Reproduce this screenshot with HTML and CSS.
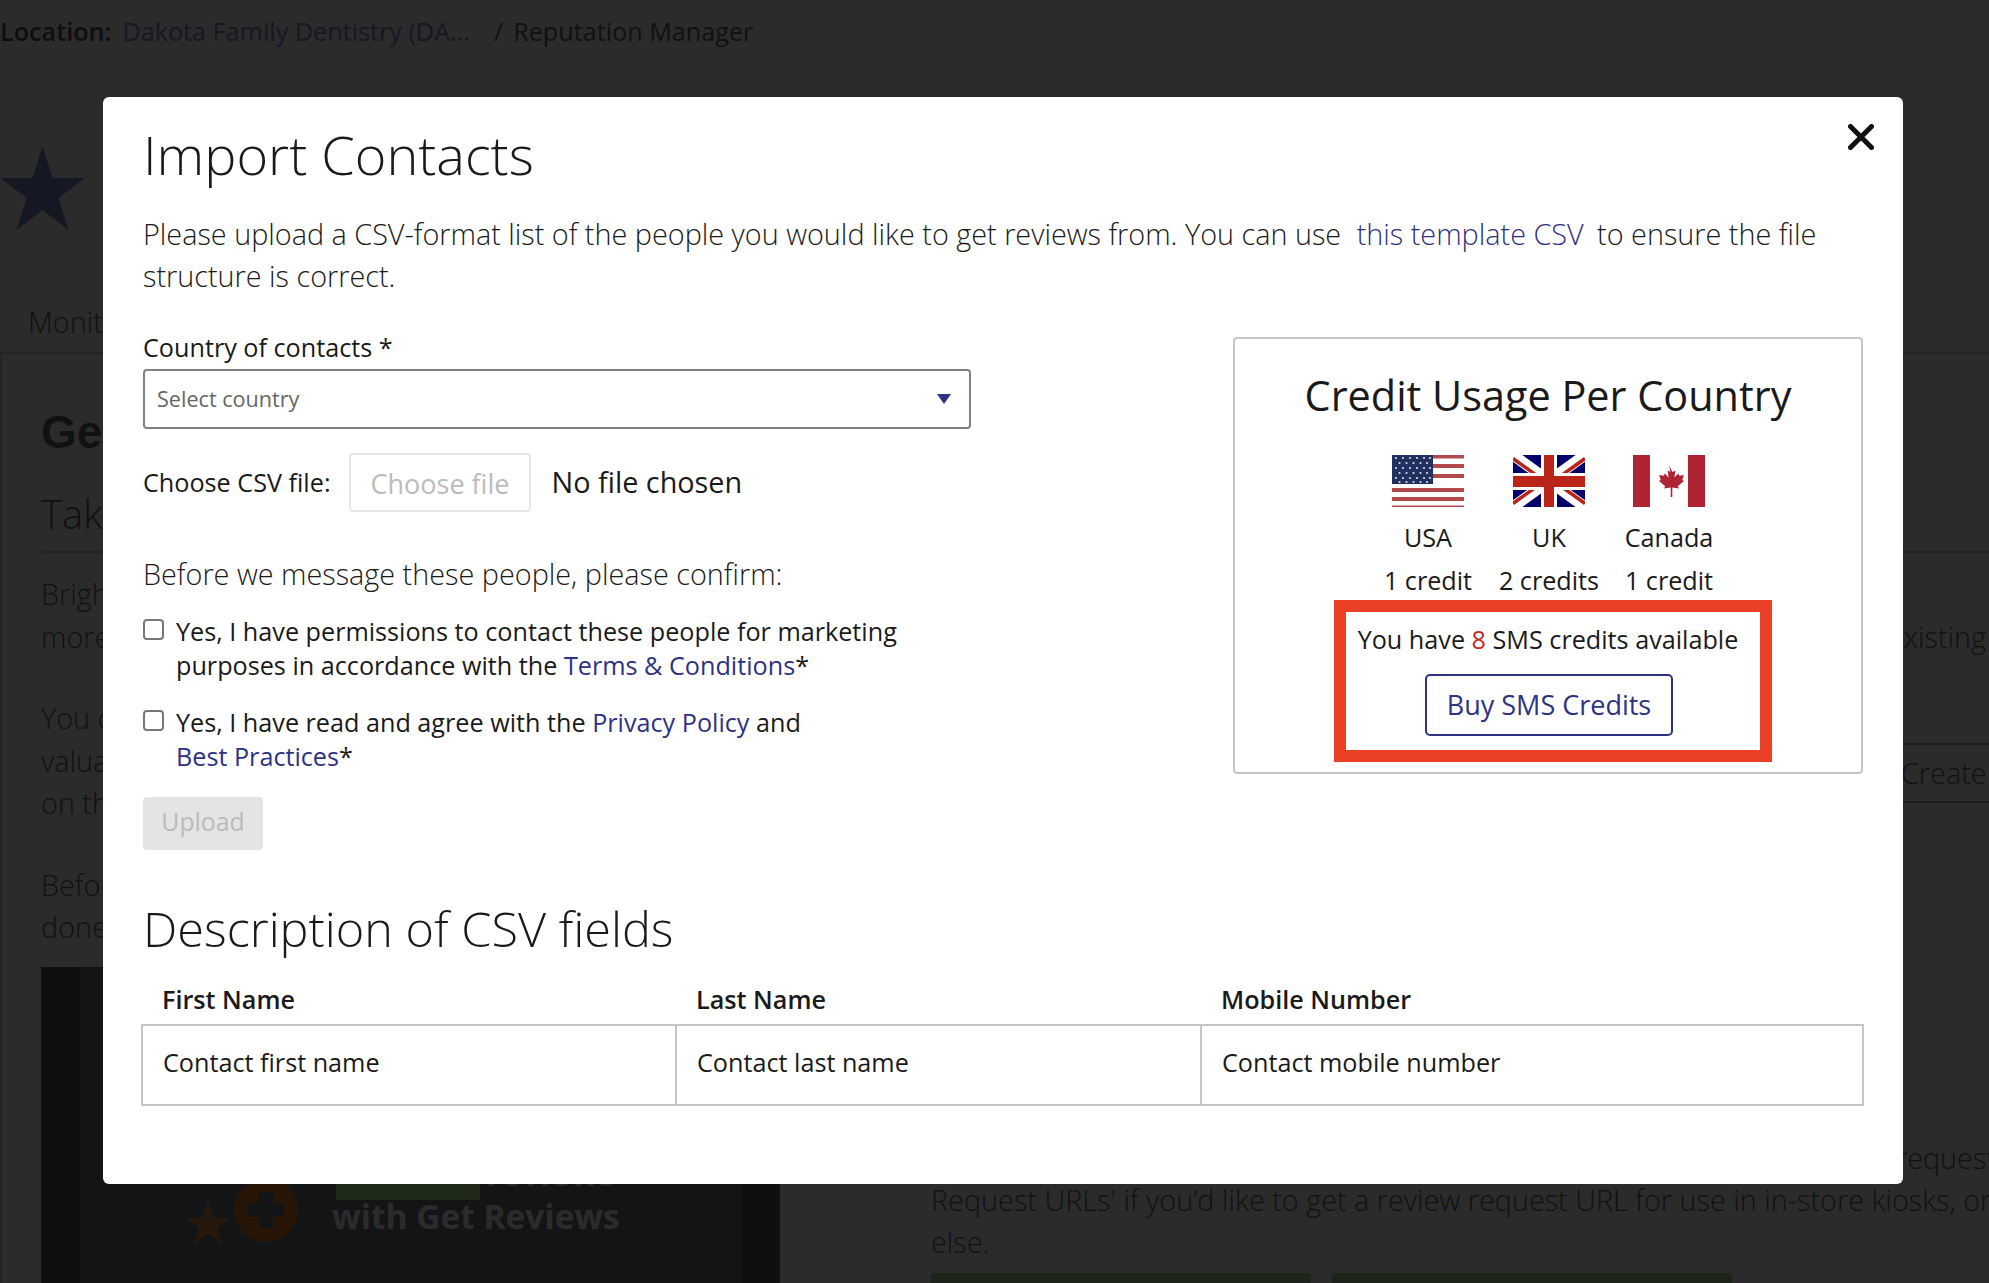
FILE: index.html
```html
<!DOCTYPE html>
<html lang="en">
<head>
<meta charset="utf-8">
<title>Import Contacts</title>
<link rel="stylesheet" href="styles.css">
</head>
<body>
<div class="page">
  <div class="crumbs"><b>Location:</b><a class="crumb-link">Dakota Family Dentistry (DA...</a><span class="crumb-sep">/</span><span>Reputation Manager</span></div>
  <svg class="page-star" viewBox="0 0 85 84"><polygon points="42.5,0 52.5,32 85,32 58.5,52 68.5,84 42.5,64 16.5,84 26.5,52 0,32 32.5,32"/></svg>
  <div class="tabs">Monitor</div>
  <section class="panel">
    <h2 class="panel-title">Get Reviews</h2>
    <h3 class="panel-sub">Take control of your reviews</h3>
    <p class="panel-para">BrightLocal helps you collect genuine customer reviews by inviting the people you have served to share their experience<span class="fit">more people about your business, so you can grow trust and win new customers, including those from your existing</span></p>
    <div class="create-row">
      <p class="panel-para">You can send review requests by SMS or email to share how<br>valuable feedback is to your business and to help you improve<br>on the reviews that customers see on the sites that matter.</p>
      <span class="create-btn">Create</span>
    </div>
    <p class="panel-para">Before you begin, please make sure your contact list is ready and<br>done in the correct format.</p>
    <div class="lower">
      <div class="promo">
        <div class="promo-inner">
          <svg class="promo-logo" viewBox="0 0 112 64"><polygon class="promo-star" points="20,20 26,38 42,38 29,48 34,64 20,54 6,64 11,48 -2,38 14,38"/><circle class="promo-disc" cx="78" cy="30" r="32"/><path class="promo-plus" d="M71 12h14v11h11v14H85v11H71V37H60V23h11z"/></svg>
          <div class="promo-copy">
            <div class="promo-l1"><span class="promo-mark"></span>reviews</div>
            <div class="promo-l2">with Get Reviews</div>
          </div>
        </div>
      </div>
      <div class="lower-right">
        <p class="panel-para lower-text">Choose how you'd like to reach your customers below. Select 'Send review request</p>
        <p class="panel-para lower-text">Request URLs' if you’d like to get a review request URL for use in in-store kiosks, or</p>
        <p class="panel-para lower-text">else.</p>
        <div class="lower-btns"><span class="green one"></span><span class="green two"></span></div>
      </div>
    </div>
  </section>
</div>

<div class="overlay">
  <div class="modal">
    <svg class="close" viewBox="0 0 26 26"><path d="M2.5 2.5l21 21M23.5 2.5l-21 21"/></svg>
    <h1 class="title">Import Contacts</h1>
    <p class="intro">Please upload a CSV-format list of the people you would like to get reviews from. You can use <a class="link link-gap">this template CSV</a> to ensure the file structure is correct.</p>
    <div class="columns">
      <form class="form">
        <label class="label">Country of contacts *</label>
        <div class="select-wrap">
          <select class="select"><option>Select country</option></select>
          <svg class="caret" viewBox="0 0 14 10"><polygon points="0,0 14,0 7,10"/></svg>
        </div>
        <div class="file-row">
          <span class="file-label">Choose CSV file:</span>
          <span class="file-btn">Choose file</span>
          <span class="file-name">No file chosen</span>
        </div>
        <p class="confirm">Before we message these people, please confirm:</p>
        <label class="check first"><input type="checkbox"><span>Yes, I have permissions to contact these people for marketing purposes in accordance with the <a class="link">Terms &amp; Conditions</a>*</span></label>
        <label class="check"><input type="checkbox"><span>Yes, I have read and agree with the <a class="link">Privacy Policy</a> and <a class="link">Best&nbsp;Practices</a>*</span></label>
        <button type="button" class="upload">Upload</button>
      </form>
      <aside class="usage">
        <h2 class="usage-title">Credit Usage Per Country</h2>
        <div class="flags">
          <div class="country c1">
            <svg class="flag" viewBox="0 0 72 52">
              <rect width="72" height="52" fill="#fff"/>
              <path class="us-stripes" d="M0 0h72v3.5H0zM0 9h72v4H0zM0 19h72v4H0zM0 33h72v4H0zM0 42h72v4H0zM0 50.500h72V52H0z"/>
              <rect width="41" height="29" fill="#22305f"/>
              <g class="us-stars">
                <circle cx="4" cy="3" r="1.100"/><circle cx="11" cy="3" r="1.100"/><circle cx="18" cy="3" r="1.100"/><circle cx="25" cy="3" r="1.100"/><circle cx="32" cy="3" r="1.100"/><circle cx="38" cy="3" r="1.100"/>
                <circle cx="7.500" cy="8" r="1.100"/><circle cx="14.500" cy="8" r="1.100"/><circle cx="21.500" cy="8" r="1.100"/><circle cx="28.500" cy="8" r="1.100"/><circle cx="35" cy="8" r="1.100"/>
                <circle cx="4" cy="13" r="1.100"/><circle cx="11" cy="13" r="1.100"/><circle cx="18" cy="13" r="1.100"/><circle cx="25" cy="13" r="1.100"/><circle cx="32" cy="13" r="1.100"/><circle cx="38" cy="13" r="1.100"/>
                <circle cx="7.500" cy="18" r="1.100"/><circle cx="14.500" cy="18" r="1.100"/><circle cx="21.500" cy="18" r="1.100"/><circle cx="28.500" cy="18" r="1.100"/><circle cx="35" cy="18" r="1.100"/>
                <circle cx="4" cy="23" r="1.100"/><circle cx="11" cy="23" r="1.100"/><circle cx="18" cy="23" r="1.100"/><circle cx="25" cy="23" r="1.100"/><circle cx="32" cy="23" r="1.100"/><circle cx="38" cy="23" r="1.100"/>
                <circle cx="7.500" cy="27" r="1.100"/><circle cx="14.500" cy="27" r="1.100"/><circle cx="21.500" cy="27" r="1.100"/><circle cx="28.500" cy="27" r="1.100"/><circle cx="35" cy="27" r="1.100"/>
              </g>
            </svg>
            <span>USA</span><span>1 credit</span>
          </div>
          <div class="country c2">
            <svg class="flag" viewBox="0 0 72 52">
              <rect width="72" height="52" fill="#00006a"/>
              <path d="M0 0L72 52M72 0L0 52" stroke="#fff" stroke-width="11"/>
              <path d="M0 3.500L30 25M72 48.500L42 27M72 3.500L42 25M0 48.500L30 27" stroke="#bb2419" stroke-width="3.500"/>
              <path d="M0 18h28V0h16v18h28v17H44v17H28V35H0z" fill="#fff"/>
              <path d="M0 21h31V0h10v21h31v11H41v20H31V32H0z" fill="#bb2419"/>
            </svg>
            <span>UK</span><span>2 credits</span>
          </div>
          <div class="country c3">
            <svg class="flag" viewBox="0 0 72 52">
              <rect width="72" height="52" fill="#fff"/>
              <path class="ca" d="M0 0h17v52H0zM55 0h17v52H55z"/>
              <path class="ca" d="M36 10.500l3.500 6.500 3-1.600-1.200 7 4-4 1 2.300 4.500-.8-1.500 5 1.700 1-6 5 .8 2.600-6.500-1V42h-1.600v-9.500l-6.500 1 .8-2.600-6-5 1.700-1-1.500-5 4.500.8 1-2.300 4 4-1.200-7 3 1.600z"/>
            </svg>
            <span>Canada</span><span>1 credit</span>
          </div>
        </div>
        <p class="balance">You have <span class="count">8</span> SMS credits available</p>
        <button type="button" class="buy">Buy SMS Credits</button>
        <div class="highlight"></div>
      </aside>
    </div>
    <h2 class="fields-title">Description of CSV fields</h2>
    <table class="fields">
      <colgroup><col class="col-a"><col class="col-b"><col class="col-c"></colgroup>
      <thead><tr><th>First Name</th><th>Last Name</th><th>Mobile Number</th></tr></thead>
      <tbody><tr><td>Contact first name</td><td>Contact last name</td><td>Contact mobile number</td></tr></tbody>
    </table>
  </div>
</div>
</body>
</html>
```
FILE: styles.css
```css
* { box-sizing: border-box; }
html, body { margin: 0; height: 100%; overflow: hidden; }
body { font-family: "Open Sans", "Liberation Sans", sans-serif; font-size: 25.2px; color: #1a1a1a; background: #fff; }
p, h1, h2, h3 { margin: 0; font-weight: 400; }

/* page behind the dialog */
.page { width: 1989px; height: 1283px; overflow: hidden; color: #666; }
.crumbs { display: flex; height: 49px; line-height: 34px; padding-top: 14px; white-space: nowrap; color: #666; }
.crumbs b { font-weight: 600; color: #555; }
.crumb-link { margin-left: 11px; color: #7c8dce; }
.crumb-sep { margin: 0 10px 0 24px; }
.page-star { display: block; width: 85px; height: 84px; margin-top: 97px; fill: #7c8dce; }
.tabs { height: 124px; padding: 72px 0 0 28px; line-height: 40px; font-size: 28.8px; font-weight: 300; border-bottom: 2px solid #ccc; }
.panel { padding: 52px 0 0 39px; border-left: 2px solid #ccc; }
.panel-title { font-family: "Liberation Sans", sans-serif; font-weight: 700; font-size: 46px; line-height: 52px; }
.panel-sub { font-size: 40px; font-weight: 300; line-height: 52px; margin-top: 30px; padding-bottom: 11px; border-bottom: 2px solid #ccc; }
.panel-para { font-size: 28.8px; font-weight: 300; line-height: 42.500px; white-space: nowrap; }
.panel-sub + .panel-para { margin-top: 20px; }
.fit { display: block; width: 1945px; text-align: justify; text-align-last: justify; white-space: normal; }
.create-row { display: flex; justify-content: space-between; margin-top: 39px; }
.create-btn { flex: none; width: 320px; margin: 46px -211px 0 0; height: 60px; line-height: 56px; padding-left: 19px; border: 2px solid #aaa; border-radius: 4px; font-size: 28.8px; font-weight: 300; }
.create-row + .panel-para { margin-top: 39px; }
.lower { display: grid; grid-template-columns: 739px 1100px; column-gap: 151px; margin-top: 18px; }
.promo { height: 320px; background: #5a5a5a; padding: 0 39px; }
.promo-inner { height: 100%; background: #72767e; display: flex; align-items: flex-start; padding: 171px 0 0 108px; }
.promo-logo { flex: none; width: 112px; height: 64px; margin-top: 42px; overflow: visible; }
.promo-star { fill: #e09050; }
.promo-disc { fill: #e8802a; }
.promo-plus { fill: #72767e; }
.promo-copy { margin-left: 32px; font-weight: 700; font-size: 33.500px; color: #fff; white-space: nowrap; }
.promo-l1 { display: flex; line-height: 50px; height: 62px; padding-top: 10px; position: relative; padding-left: 154px; }
.promo-mark { position: absolute; left: 4px; top: 0; width: 144px; height: 62px; background: #b8f08c; }
.promo-l2 { line-height: 32px; }
.lower-right { padding-top: 170px; }
.lower-text { line-height: 42px; }
.lower-btns { display: flex; gap: 21px; margin-top: 10px; }
.green { height: 40px; background: #a5d090; border-radius: 4px; }
.green.one { width: 380px; }
.green.two { width: 400px; }

/* dialog */
.overlay { position: fixed; inset: 0; background: rgba(0, 0, 0, .83); padding: 97px 86px 0 103px; }
.modal { position: relative; background: #fff; border-radius: 6px; padding: 24px 40px 78px; }
.close { position: absolute; top: 27px; right: 29px; width: 26px; height: 26px; fill: none; stroke: #111; stroke-width: 5; stroke-linecap: round; }
.title { font-size: 54px; font-weight: 300; line-height: 66px; }
.intro { font-size: 28.8px; font-weight: 300; line-height: 42px; margin-top: 26px; }
.link { color: #2e3283; }
.link-gap { margin: 0 6px 0 8px; }
.columns { display: grid; grid-template-columns: 828px 630px; justify-content: space-between; margin-top: 34px; }
.label { display: block; line-height: 32px; padding-bottom: 2px; }
.select-wrap { position: relative; margin-top: 4px; }
.select { display: block; width: 100%; height: 60px; padding: 0 12px 2px; border: 2px solid #808080; border-radius: 4px; background: #fff; appearance: none; font: inherit; font-size: 21.6px; color: #666; }
.caret { position: absolute; top: 25px; right: 20px; width: 14px; height: 10px; fill: #2e3283; }
.file-row { display: flex; align-items: center; margin-top: 24px; line-height: 34px; }
.file-label { padding-bottom: 2px; }
.file-btn { display: block; height: 59px; line-height: 57px; margin-left: 18px; padding: 0 20px; border: 2px solid #e6e6e6; border-radius: 4px; color: #bbb; font-size: 27px; }
.file-name { margin-left: 20px; font-size: 28.8px; padding-bottom: 2px; }
.confirm { font-size: 28.8px; font-weight: 300; line-height: 40px; margin-top: 42px; }
.check { display: flex; gap: 12px; line-height: 34px; margin-top: 22px; width: 780px; }
.check.first { margin-top: 20px; padding-bottom: 1px; }
.check input { appearance: none; flex: none; width: 21px; height: 21px; margin: 5px 0 0; border: 2px solid #777; border-radius: 4px; background: #fff; }
.upload { display: block; width: 120px; height: 53px; margin-top: 24px; padding: 0 0 6px; border: 0; border-radius: 4px; background: #e4e4e4; color: #bbb; font: inherit; font-size: 24.8px; }
.usage { position: relative; height: 437px; margin-top: 6px; border: 2px solid #c6c6c6; border-radius: 4px; text-align: center; padding-top: 28px; }
.usage-title { font-size: 41.4px; line-height: 56px; }
.flags { display: flex; justify-content: center; margin-top: 32px; }
.country { display: flex; flex-direction: column; align-items: center; line-height: 42.500px; width: 120px; }
.c1 { width: 122px; }
.flag { display: block; width: 72px; height: 52px; margin-bottom: 9px; }
.us-stripes { fill: #b24a4d; }
.us-stars { fill: #d8dce8; }
.ca { fill: #ae2434; }
.balance { margin-top: 21px; line-height: 34px; }
.count { color: #c0281c; }
.buy { display: block; width: 248px; height: 62px; margin: 18px 188px 0 190px; padding-bottom: 2px; border: 2px solid #2e3283; border-radius: 5px; background: #fff; color: #2e3283; font: inherit; font-size: 27px; }
.highlight { position: absolute; left: 99px; top: 261px; width: 438px; height: 162px; border: 12px solid #ea4126; }
.fields-title { font-size: 48.6px; font-weight: 300; line-height: 60px; margin-top: 48px; }
.fields { width: 1721px; margin: 25px 0 0 -2px; border-collapse: collapse; table-layout: fixed; }
.col-a { width: 534px; }
.col-b { width: 525px; }
.col-c { width: 662px; }
.fields th { text-align: left; font-weight: 600; line-height: 33px; padding: 0 20px 8px; }
.fields td { height: 80px; padding: 0 20px 6px; border: 2px solid #c6c6c6; line-height: 34px; }
```
